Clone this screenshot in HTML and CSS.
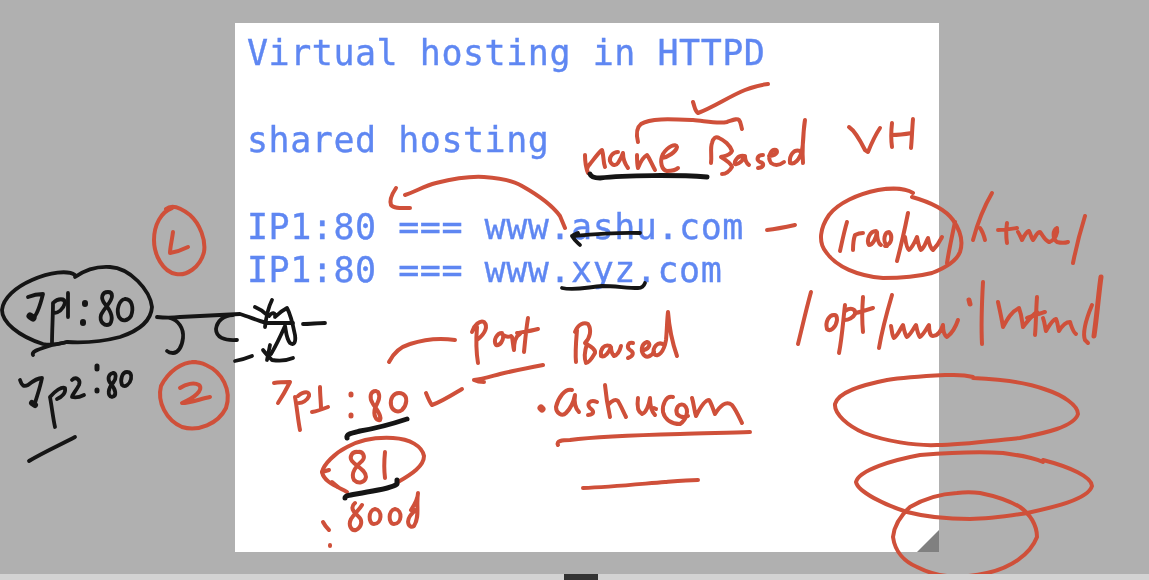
FILE: index.html
```html
<!DOCTYPE html>
<html lang="en">
<head>
<meta charset="utf-8">
<title>Virtual hosting in HTTPD</title>
<link rel="stylesheet" href="styles.css">
</head>
<body>
<main class="stage">
  <section class="slide">
    <pre class="slide-text">Virtual hosting in HTTPD

shared hosting

IP1:80 === www.ashu.com
IP1:80 === www.xyz.com</pre>
    <div class="fold"></div>
  </section>
  <svg class="ink" viewBox="0 0 1149 574" width="1149" height="574" role="img" aria-label="Freehand pen annotations">
    <g class="pen-red">
      <path d="M405 195C415 192 424 186 436 183C452 179 468 176 484 177C500 178 512 180 522 186C538 195 552 205 560 216L565 228"/>
      <path d="M396 188C392 194 389 200 391 205C394 209 402 208 410 208"/>
      <path d="M693 102C695 108 695 111 698 113C712 108 730 96 745 90C753 87 760 85 768 84"/>
      <path d="M638 142C636 134 636 128 641 124C650 118 670 119 693 120C705 121 718 124 727 122C733 120 737 118 739 120C741 122 741 126 742 129"/>
      <path d="M585 155C585 162 586 168 588 173C586 170 587 167 590 164C594 159 599 152 602 150C604 156 603 162 605 167"/>
      <path d="M618 152C613 152 609 157 610 161C612 166 616 166 618 163C620 160 622 156 623 153C623 158 625 164 628 168"/>
      <path d="M637 155C637 160 637 164 638 168C640 163 643 157 647 155C650 159 652 165 655 170"/>
      <path d="M662 158C668 157 676 152 677 147C676 143 668 146 663 154C659 162 662 170 667 171C671 171 676 170 678 168"/>
      <path d="M711 163C712 155 710 148 712 143C713 138 716 136 719 138C724 140 730 145 732 151C730 156 724 156 721 157C726 160 731 163 732 167C729 172 726 174 722 174"/>
      <path d="M744 156C738 155 734 161 735 164C739 165 743 160 745 156C745 160 746 163 749 165"/>
      <path d="M763 155C757 155 756 160 760 162C764 163 765 167 758 168"/>
      <path d="M769 156C775 156 779 152 776 150C771 149 767 157 771 163C775 166 780 165 784 162"/>
      <path d="M800 151C794 149 789 155 790 163C794 165 800 160 802 150C804 140 803 130 805 120C803 135 802 150 803 163"/>
      <path d="M849 127C855 131 860 140 865 150L868 152C872 142 876 134 880 128"/>
      <path d="M892 123C891 132 891 140 892 147M913 119C912 130 912 138 911 148M892 135C898 135 906 134 912 133"/>
      <path d="M767 230C776 229 786 227 795 225"/>
      <path d="M913 193C905 188 890 188 878 190C858 194 838 203 829 215C820 228 818 242 826 252C836 267 858 276 883 278C902 278 920 276 932 273C945 268 956 262 960 252C964 240 960 230 953 220C945 209 930 202 912 197"/>
      <path d="M955 222C952 236 949 250 947 263"/>
      <path d="M847 222C844 232 842 242 840 251M853 250C853 244 854 238 855 235C857 234 860 233 863 233"/>
      <path d="M876 231C870 231 866 240 869 245C873 245 876 238 877 232C877 238 878 243 881 245"/>
      <path d="M885 246C892 244 893 236 889 232C885 232 882 240 887 246"/>
      <path d="M908 213C905 228 901 246 897 261"/>
      <path d="M905 237C906 244 907 249 909 250C913 247 915 241 917 237C918 242 919 248 921 250C925 247 926 241 928 238C929 243 930 248 933 250C937 246 940 241 942 237"/>
      <path d="M992 193C985 205 977 225 973 240M980 228C983 232 984 236 985 240"/>
      <path d="M1007 223C1006 230 1006 237 1007 243M998 230C1004 230 1010 229 1017 228"/>
      <path d="M1018 232C1020 235 1021 238 1022 240C1024 236 1026 232 1029 231C1031 234 1031 238 1033 240C1036 236 1037 232 1040 232C1043 235 1044 240 1049 242"/>
      <path d="M1049 242C1056 240 1058 232 1057 228C1053 230 1052 238 1057 242C1061 243 1065 243 1068 242"/>
      <path d="M1085 216C1080 232 1076 248 1073 263"/>
      <path d="M811 292C806 310 802 328 798 344"/>
      <path d="M835 315C829 314 825 322 827 329C830 332 836 328 837 320C837 317 836 315 835 315"/>
      <path d="M845 305C843 322 842 338 839 353M845 311C851 307 856 309 855 314C853 318 848 320 845 320"/>
      <path d="M863 297C862 310 862 322 863 332M855 313C861 312 867 310 873 308"/>
      <path d="M892 295C887 312 882 330 879 348"/>
      <path d="M891 326C892 330 892 336 894 338C898 335 900 329 903 325C904 330 905 335 907 337C911 334 913 329 916 325C917 330 918 335 920 337C924 334 926 329 929 325C929 330 930 336 933 336C938 336 941 331 943 325C943 330 944 335 947 337C951 334 955 329 958 320"/>
      <path class="w5" d="M969 300L970 304"/>
      <path d="M983 282C982 300 981 325 982 344"/>
      <path d="M998 302C1000 311 1002 320 1003 327C1007 320 1011 312 1019 308C1022 316 1022 322 1023 327C1027 322 1032 315 1037 312"/>
      <path d="M1037 297C1036 310 1036 324 1035 335M1027 318C1034 316 1041 313 1045 312"/>
      <path d="M1043 318C1045 323 1045 328 1046 331C1049 326 1052 320 1056 319C1058 323 1058 328 1059 331C1062 326 1066 322 1070 322C1072 328 1073 332 1076 334"/>
      <path d="M1092 305C1087 317 1082 332 1085 340L1088 343"/>
      <path class="w5" d="M1101 277C1099 290 1097 315 1094 336"/>
      <path d="M973 377C962 374 955 375 945 375C925 376 905 377 887 380C862 385 838 392 835 404C834 414 848 426 864 433C885 441 915 446 937 445C960 445 990 441 1020 438C1045 433 1074 427 1078 414C1078 405 1062 395 1047 390C1025 382 1000 379 973 378"/>
      <path d="M1043 462C1030 456 1015 455 1003 453C975 451 945 453 920 455C893 460 859 470 856 482C858 492 885 505 907 512C930 518 950 519 970 519C990 519 1008 516 1027 513C1050 508 1088 500 1092 486C1092 477 1070 467 1043 460"/>
      <path d="M980 493C972 492 965 492 957 493C938 494 922 500 910 507C899 517 894 527 893 537C895 552 905 562 917 567C927 572 937 575 947 576C960 577 975 576 987 573C1010 568 1030 555 1037 537C1037 525 1030 514 1020 507C1008 500 995 496 980 493"/>
      <path d="M274 383C280 382 285 382 290 382M290 382C286 390 282 397 278 403"/>
      <path d="M295 397C297 408 298 420 300 430M298 396C304 391 310 391 309 396C307 401 302 403 299 403"/>
      <path d="M320 387C320 395 321 402 321 409M312 412C318 411 323 409 328 407"/>
      <path class="w5" d="M351 394L351 395M351 415L351 416"/>
      <path d="M376 391C370 391 369 398 373 404C377 410 382 416 380 420C376 421 373 415 375 408C378 402 381 397 378 392"/>
      <path d="M399 393C393 393 390 399 391 405C392 411 398 413 402 410C407 405 408 397 403 394C401 393 400 393 399 393"/>
      <path d="M426 393C428 398 430 403 432 405C441 402 452 395 462 389"/>
      <path d="M389 362C393 354 400 347 410 344C425 339 442 338 455 340"/>
      <path d="M398 482C412 474 424 466 424 456C422 446 410 439 393 438C375 437 358 441 347 447C335 453 324 464 322 472C324 482 336 486 347 492"/>
      <path d="M322 472L329 470M332 482L338 487"/>
      <path d="M358 452C352 451 349 457 352 461C356 466 366 470 366 477C365 483 358 484 354 480C350 473 357 465 362 461C366 457 363 451 358 452"/>
      <path d="M385 452C384 462 384 470 385 478"/>
      <path d="M355 503C350 507 353 512 358 516C363 520 362 527 356 530C351 531 348 525 351 519C355 513 359 510 362 505"/>
      <path d="M375 509C368 510 368 524 374 524C382 524 383 510 375 509"/>
      <path d="M395 509C388 510 388 524 394 524C402 524 403 510 395 509"/>
      <path d="M411 510C415 504 418 498 418 493C416 505 420 517 414 526C409 529 406 522 410 516C412 513 414 512 415 510"/>
      <path d="M323 522C325 526 327 528 329 530M330 545L330 546"/>
      <path d="M477 327C476 339 476 351 478 363M472 332C474 325 480 320 484 322C488 326 486 333 477 340"/>
      <path d="M502 333C497 333 493 340 496 345C500 346 504 340 503 335C506 337 509 337 511 336"/>
      <path d="M512 337C513 342 513 346 514 350C514 342 516 336 520 334"/>
      <path d="M528 318C526 330 525 342 524 352M517 333C523 332 531 331 538 329"/>
      <path d="M543 365C528 368 512 371 500 374C492 376 482 379 474 380C478 382 481 382 484 382"/>
      <path d="M577 330C576 342 575 352 576 362M575 332C578 324 584 322 588 324C592 330 590 338 585 343C590 346 596 349 595 353C591 360 588 363 586 363C584 358 585 350 587 344"/>
      <path d="M610 346C604 344 600 349 601 356C605 358 609 352 611 347C611 351 612 354 614 356C618 355 620 350 621 346"/>
      <path d="M633 343C628 342 626 347 630 350C634 352 634 356 628 358"/>
      <path d="M644 350C650 348 651 343 647 342C641 344 640 352 645 356C648 358 652 355 654 352"/>
      <path d="M664 345C658 340 652 348 654 354C658 358 664 352 666 340C667 330 667 320 668 312C669 325 672 342 677 356"/>
      <path class="w7" d="M541 408L542 409"/>
      <path d="M572 390C565 388 558 398 556 407C556 413 562 417 566 413C571 408 574 400 575 395C574 402 575 408 579 412"/>
      <path d="M597 402C590 399 586 404 590 408C594 411 595 414 588 415"/>
      <path d="M605 385C606 396 608 408 610 417M608 405C612 400 616 399 618 401C621 406 623 411 626 417"/>
      <path d="M638 398C637 405 638 412 642 414C646 413 649 405 650 398C650 405 652 412 655 415"/>
      <path d="M654 408L656 409"/>
      <path d="M673 397C666 395 662 405 663 412C665 420 672 424 680 424C686 420 690 410 684 405C679 403 675 408 677 414C680 417 684 418 688 416"/>
      <path d="M692 398C694 404 694 410 696 416C700 408 705 400 709 400C712 404 713 410 715 414C720 406 726 400 732 405C736 410 739 417 742 423"/>
      <path d="M558 445C556 441 562 440 570 440C600 436 640 435 680 434C705 433 730 433 750 432"/>
      <path d="M583 488C610 487 640 484 665 482C677 481 688 480 698 480"/>
      <path d="M166 209C172 204 180 207 190 215C200 224 206 240 204 252C200 268 186 276 176 274C163 272 154 255 154 240C154 225 161 212 172 208"/>
      <path d="M173 232C172 240 170 248 170 253C176 252 182 250 188 247"/>
      <path d="M196 362C182 361 168 372 161 386C157 402 166 420 182 427C198 432 218 424 226 408C232 390 222 372 206 365C202 363 198 362 192 362"/>
      <path d="M180 388C186 384 194 382 199 385C204 390 194 398 182 403C190 403 200 399 210 397"/>
    </g>
    <g class="pen-black">
      <path d="M75 275C68 270 50 272 32 280C16 287 3 298 2 310C2 322 18 336 43 344C55 346 62 343 67 342C85 343 105 341 120 337C138 331 151 322 152 307C150 290 130 268 110 267C95 266 82 272 75 277"/>
      <path d="M28 297C33 295 38 294 43 294C40 306 36 316 33 318"/>
      <path class="w7" d="M30 316L33 318"/>
      <path d="M53 303C53 316 52 330 52 344M53 303C58 298 65 298 65 303C63 310 58 313 54 313"/>
      <path d="M68 293C68 300 68 310 68 317"/>
      <path class="w6" d="M85 303L85 304M83 322L83 323"/>
      <path d="M108 292C102 292 100 298 105 304C110 310 114 318 110 324C105 327 99 322 101 315C104 308 112 302 112 296C112 293 110 292 108 292"/>
      <path d="M125 299C119 300 116 310 119 317C122 322 128 321 131 316C134 308 132 299 125 299"/>
      <path d="M33 355C31 351 40 349 52 345C58 344 62 343 67 342"/>
      <path d="M20 380C22 386 24 387 28 385C33 381 38 378 42 378C40 388 37 396 35 403"/>
      <path class="w6" d="M32 403L35 405"/>
      <path d="M50 397C52 408 53 418 55 427M50 397C55 391 62 386 65 388C66 393 62 397 57 399"/>
      <path d="M72 380C76 376 81 380 79 385C76 391 72 395 72 397C76 398 80 397 84 395"/>
      <path class="w5" d="M97 366L97 369M97 390L97 391"/>
      <path d="M113 373C108 374 107 380 111 384C116 390 117 396 112 397C107 396 108 388 113 383C117 378 116 373 113 373"/>
      <path d="M127 372C122 372 120 380 122 385C125 388 130 384 131 379C132 374 130 372 127 372"/>
      <path d="M75 437C60 445 44 452 29 461"/>
      <path d="M157 317C165 318 172 318 180 317C200 316 220 315 240 314C250 317 258 321 267 323"/>
      <path d="M170 318C178 320 184 328 183 338C182 347 178 353 173 353C170 353 168 352 167 351"/>
      <path d="M233 315C224 315 217 321 216 329C216 337 224 341 237 340"/>
      <path d="M235 361C241 360 247 358 252 356"/>
      <path d="M303 324C310 324 318 323 325 323"/>
      <path d="M255 307C260 309 264 312 267 315M272 300C268 308 266 318 265 327"/>
      <path d="M269 316C272 312 276 312 275 317C280 312 283 310 287 308C291 315 293 325 295 335C296 342 294 346 290 343C286 338 286 330 285 326C281 335 277 344 271 354"/>
      <path d="M267 323C276 323 285 323 293 323"/>
      <path d="M263 350C266 354 269 357 272 360M270 345C269 350 268 355 267 360M272 360C279 361 286 361 293 358"/>
      <path d="M640 233C620 232 595 234 572 236M572 236C575 241 578 243 580 245M572 236C574 234 576 234 578 233"/>
      <path class="w5" d="M590 174C591 177 594 178 600 178C625 175 680 175 707 177"/>
      <path d="M562 288C575 291 588 287 602 286C615 286 627 288 638 288C642 288 644 286 645 283"/>
      <path class="w5" d="M347 438C346 434 352 433 360 431C378 428 395 423 407 419"/>
      <path class="w5" d="M345 498C345 495 352 495 367 492C380 490 392 488 397 484L397 480"/>
    </g>
  </svg>
</main>
<div class="scrollbar"><div class="thumb"></div></div>
</body>
</html>
```
FILE: styles.css
```css
* {
  box-sizing: border-box;
}

html,
body {
  margin: 0;
  height: 100%;
}

body {
  width: 1149px;
  height: 580px;
  overflow: hidden;
  display: flex;
  flex-direction: column;
  background: #b0b0b0;
}

.stage {
  position: relative;
  height: 574px;
  padding: 23px 0 0 235px;
  overflow: hidden;
}

.slide {
  position: relative;
  width: 704px;
  height: 529px;
  padding: 9px 12px 0;
  background: #fff;
}

.slide-text {
  margin: 0;
  font-family: "DejaVu Sans Mono", "Liberation Mono", monospace;
  font-size: 35px;
  letter-spacing: 0.53px;
  line-height: 43.4px;
  color: #5f87f2;
  -webkit-text-stroke: 0.35px #5f87f2;
  filter: blur(0.3px);
}

.fold {
  position: absolute;
  right: 0;
  bottom: 0;
  width: 22px;
  height: 22px;
  background: #808080;
  clip-path: polygon(100% 0, 100% 100%, 0 100%);
}

.ink {
  position: absolute;
  left: 0;
  top: 0;
  filter: blur(0.35px);
}

.ink path {
  fill: none;
  stroke-linecap: round;
  stroke-linejoin: round;
}

.pen-red path {
  stroke: #cf503a;
  stroke-width: 4;
}

.pen-black path {
  stroke: #151515;
  stroke-width: 3.8;
}

.ink .w5 {
  stroke-width: 5;
}

.ink .w6 {
  stroke-width: 6;
}

.ink .w7 {
  stroke-width: 7;
}

.scrollbar {
  height: 6px;
  padding-left: 564px;
  background: #d3d3d3;
}

.thumb {
  width: 34px;
  height: 6px;
  background: #333;
}
```
